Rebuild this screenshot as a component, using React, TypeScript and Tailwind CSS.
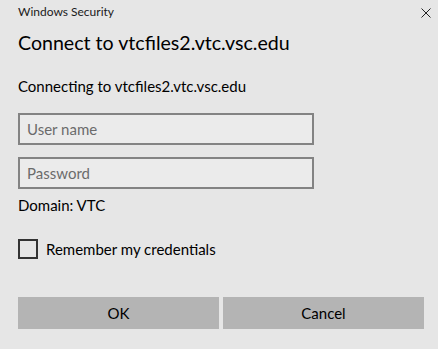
import { useState } from 'react';

export default function App() {
  const [remember, setRemember] = useState(false);

  return (
    <div
      className="w-[438px] h-[349px] bg-[#e6e6e6] text-[#000] relative overflow-hidden"
      style={{ fontFamily: 'Lato, "Noto Sans", sans-serif' }}
    >
      {/* Title bar */}
      <div className="h-[27px] pl-[18px] pt-[4px] text-[12px] leading-[16px] text-[#1a1a1a]">Windows Security</div>
      <button className="absolute top-[8px] left-[421px] w-[10px] h-[10px]" aria-label="Close">
        <svg width="10" height="10" viewBox="0 0 10 10" className="block">
          <path d="M0.5 0.5 L9.5 9.5 M9.5 0.5 L0.5 9.5" stroke="#222" strokeWidth="1" />
        </svg>
      </button>

      <div className="px-[18px]">
        <h1 className="mt-[2px] text-[19.6px] leading-[28px] font-normal">Connect to vtcfiles2.vtc.vsc.edu</h1>
        <p className="mt-[19px] text-[15px] leading-[20px]">Connecting to vtcfiles2.vtc.vsc.edu</p>

        <div className="mt-[17px] flex flex-col gap-[12px] w-[296px]">
          <input
            placeholder="User name"
            className="h-[32px] px-[7px] border-2 border-[#838383] bg-[#ebebeb] text-[15px] placeholder:text-[#6b6b6b] outline-none"
          />
          <input
            type="password"
            placeholder="Password"
            className="h-[32px] px-[7px] border-2 border-[#838383] bg-[#ebebeb] text-[15px] placeholder:text-[#6b6b6b] outline-none"
          />
        </div>

        <p className="mt-[6px] text-[15px] leading-[20px]">Domain: VTC</p>

        <label className="mt-[24px] flex items-center gap-[8px] cursor-pointer">
          <input
            type="checkbox"
            checked={remember}
            onChange={() => setRemember(!remember)}
            className="appearance-none w-[20px] h-[20px] border-2 border-[#333] bg-transparent"
          />
          <span className="text-[15px] leading-[20px]">Remember my credentials</span>
        </label>

        <div className="mt-[38px] flex gap-[4px] w-[406px]">
          <button className="flex-1 h-[32px] bg-[#b4b4b4] text-[15px]">OK</button>
          <button className="flex-1 h-[32px] bg-[#b4b4b4] text-[15px]">Cancel</button>
        </div>
      </div>
    </div>
  );
}
